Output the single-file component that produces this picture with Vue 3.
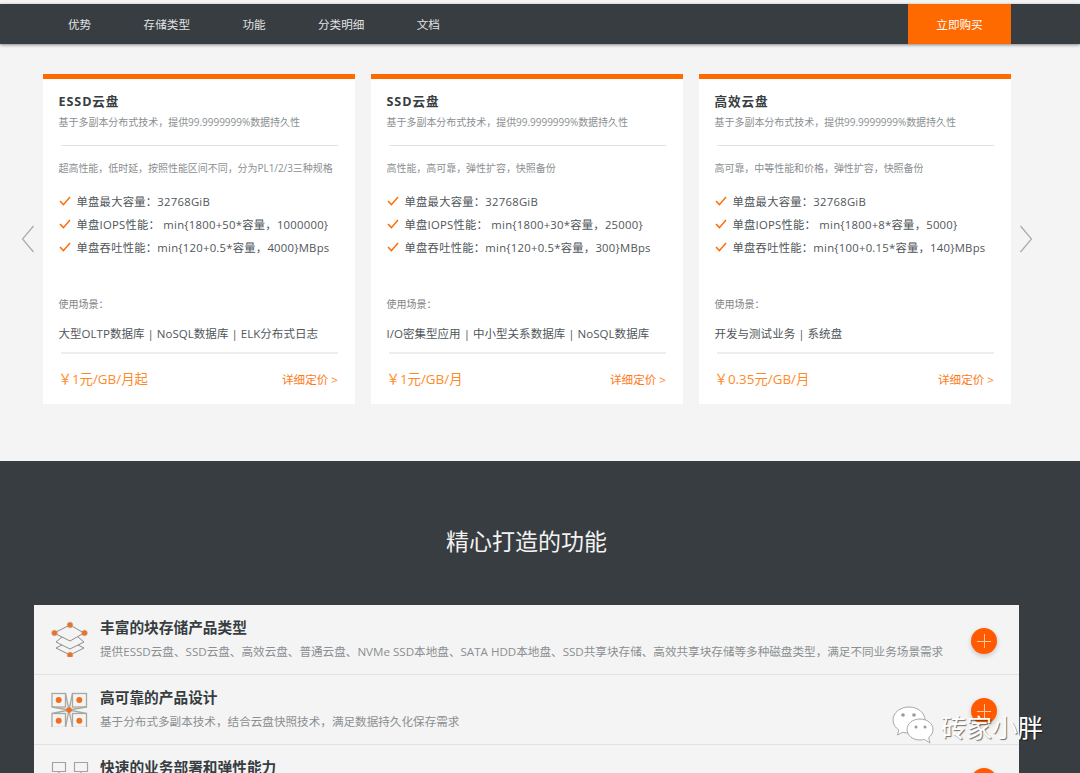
<template>
  <div class="page">
    <nav class="topnav">
      <div class="nav-links">
        <a v-for="item in navItems" :key="item">{{ item }}</a>
      </div>
      <a class="buy">立即购买</a>
    </nav>

    <section class="cards-section">
      <svg class="arrow arrow-left" width="14" height="28" viewBox="0 0 14 28"><path d="M12.500 1 1.500 14l11 13" /></svg>
      <div class="cards">
        <div v-for="card in cards" :key="card.name" class="card">
          <h3 class="card-title">{{ card.name }}</h3>
          <p class="card-sub">基于多副本分布式技术，提供99.9999999%数据持久性</p>
          <div class="line"></div>
          <p class="card-desc">{{ card.desc }}</p>
          <ul class="specs">
            <li v-for="spec in card.specs" :key="spec">
              <svg width="12" height="10" viewBox="0 0 12 10"><path d="M1 5l3.400 3.600L11 1" /></svg>
              <span>{{ spec }}</span>
            </li>
          </ul>
          <p class="scene-label">使用场景：</p>
          <p class="scene">{{ card.scene }}</p>
          <div class="line line-thick"></div>
          <div class="price-row">
            <span class="price">{{ card.price }}</span>
            <a class="detail">详细定价 &gt;</a>
          </div>
        </div>
      </div>
      <svg class="arrow arrow-right" width="14" height="28" viewBox="0 0 14 28"><path d="M1.500 1l11 13-11 13" /></svg>
    </section>

    <section class="features">
      <h2 class="features-title">精心打造的功能</h2>
      <div class="feature-list">
        <div v-for="(f, i) in features" :key="f.title" class="feature">
          <div class="feature-icon">
            <svg v-if="i === 0" width="38" height="38" viewBox="0 0 38 38">
              <g fill="none" stroke="#8c8c88" stroke-width="1">
                <path d="M19 6 33 14 19 22 3 14Z" />
                <path d="M11 18 5 23 19 30 33 23 27 18" />
                <path d="M11 26 5 29 19 36 33 29 27 26" />
              </g>
              <g fill="#f0701f" stroke="#b5a99b" stroke-width=".6">
                <circle cx="19" cy="6" r="2.800" />
                <circle cx="3.500" cy="14" r="2.800" />
                <circle cx="33.500" cy="14" r="2.800" />
                <circle cx="19" cy="36" r="2.800" />
              </g>
            </svg>
            <svg v-else-if="i === 1" width="38" height="38" viewBox="0 0 38 38">
              <g fill="none" stroke="#a8a8a3" stroke-width="1.300">
                <rect x="1" y="4.500" width="13.500" height="13.500" />
                <rect x="21.500" y="4.500" width="14" height="13.500" />
                <rect x="1" y="24.500" width="13.500" height="14" />
                <rect x="21.500" y="24.500" width="14" height="14" />
                <path d="M1 18 18 21 35.500 18M1 24.500 18 21 35.500 24.500M14.500 4.500 18 21 21.500 4.500M14.500 38.500 18 21 21.500 38.500" />
              </g>
              <g fill="#f0701f">
                <circle cx="7.700" cy="11" r="3" />
                <circle cx="28.300" cy="11" r="3" />
                <circle cx="7.700" cy="31.700" r="3" />
                <circle cx="28.300" cy="31.700" r="3" />
                <circle cx="18" cy="21" r="2.800" />
              </g>
            </svg>
            <svg v-else width="38" height="38" viewBox="0 0 38 38">
              <g fill="none" stroke="#a3a39e" stroke-width="1.200">
                <path d="M1.500 3.500h13v9h-13zM8 12.500v8" />
                <path d="M23.500 3.500h13v9h-13zM30 12.500v8" />
              </g>
            </svg>
          </div>
          <div class="feature-text">
            <h4>{{ f.title }}</h4>
            <p>{{ f.text }}</p>
          </div>
          <span class="plus"></span>
        </div>
      </div>
    </section>

    <div class="watermark">
      <svg width="42" height="38" viewBox="0 0 42 38">
        <path class="bubble" d="M17 1C8 1 1 6.800 1 14c0 4 2.300 7.600 5.800 10L5.500 29l5.300-2.800c2 .6 4 .9 6.200 .9 9 0 16-5.800 16-13S26 1 17 1Z" />
        <path class="bubble" d="M28 13c-7.500 0-13 4.800-13 10.500S20.500 34 28 34c1.600 0 3-.2 4.400-.6L38 37l-1.300-5.500C39.300 29.600 41 26.800 41 23.500 41 17.800 35.500 13 28 13Z" />
        <circle cx="11" cy="9" r="1.800" fill="#9a9a9a" />
        <circle cx="22" cy="9" r="1.800" fill="#9a9a9a" />
        <circle cx="24" cy="21" r="1.500" fill="#9a9a9a" />
        <circle cx="33" cy="21" r="1.500" fill="#9a9a9a" />
      </svg>
      <span>砖家小胖</span>
    </div>
  </div>
</template>

<script setup>
const navItems = ['优势', '存储类型', '功能', '分类明细', '文档']

const cards = [
  {
    name: 'ESSD云盘',
    desc: '超高性能，低时延，按照性能区间不同，分为PL1/2/3三种规格',
    specs: ['单盘最大容量：32768GiB', '单盘IOPS性能： min{1800+50*容量，1000000}', '单盘吞吐性能：min{120+0.5*容量，4000}MBps'],
    scene: '大型OLTP数据库 | NoSQL数据库 | ELK分布式日志',
    price: '￥1元/GB/月起'
  },
  {
    name: 'SSD云盘',
    desc: '高性能，高可靠，弹性扩容，快照备份',
    specs: ['单盘最大容量：32768GiB', '单盘IOPS性能： min{1800+30*容量，25000}', '单盘吞吐性能：min{120+0.5*容量，300}MBps'],
    scene: 'I/O密集型应用 | 中小型关系数据库 | NoSQL数据库',
    price: '￥1元/GB/月'
  },
  {
    name: '高效云盘',
    desc: '高可靠，中等性能和价格，弹性扩容，快照备份',
    specs: ['单盘最大容量：32768GiB', '单盘IOPS性能： min{1800+8*容量，5000}', '单盘吞吐性能：min{100+0.15*容量，140}MBps'],
    scene: '开发与测试业务 | 系统盘',
    price: '￥0.35元/GB/月'
  }
]

const features = [
  {
    title: '丰富的块存储产品类型',
    text: '提供ESSD云盘、SSD云盘、高效云盘、普通云盘、NVMe SSD本地盘、SATA HDD本地盘、SSD共享块存储、高效共享块存储等多种磁盘类型，满足不同业务场景需求'
  },
  {
    title: '高可靠的产品设计',
    text: '基于分布式多副本技术，结合云盘快照技术，满足数据持久化保存需求'
  },
  {
    title: '快速的业务部署和弹性能力',
    text: '分钟级完成云盘的创建和挂载，支持在线扩容'
  }
]
</script>

<style>
html, body {
  margin: 0;
  height: 773px;
  overflow: hidden;
  background: #f4f4f4;
}
</style>

<style scoped>
.page {
  position: relative;
  height: 773px;
  overflow: hidden;
  padding-top: 4px;
  box-sizing: border-box;
  background: #f4f4f4;
  font-family: "Open Sans", "Noto Sans CJK SC", sans-serif;
}

p, h2, h3, h4, ul {
  margin: 0;
  padding: 0;
}

.topnav {
  display: flex;
  justify-content: space-between;
  height: 40px;
  padding: 0 69px 0 68px;
  background: #373d41;
  box-shadow: 0 1px 3px rgba(0, 0, 0, 0.45);
}

.nav-links {
  display: flex;
  gap: 52.4px;
  align-items: center;
  color: #e2e3e3;
  font-size: 11.6px;
}

.buy {
  display: flex;
  align-items: center;
  justify-content: center;
  width: 103px;
  background: #ff6a00;
  color: #fff;
  font-size: 11.6px;
}

.cards-section {
  position: relative;
  height: 417px;
  padding: 30px 0 0 43px;
  box-sizing: border-box;
}

.arrow {
  position: absolute;
  top: 181px;
  fill: none;
  stroke: #a5abab;
  stroke-width: 1.2;
}

.arrow-left {
  left: 21px;
}

.arrow-right {
  left: 1019px;
}

.cards {
  display: flex;
  gap: 16px;
}

.card {
  width: 312px;
  height: 330px;
  box-sizing: border-box;
  padding: 14px 17px 0 15.5px;
  background: #fff;
  border-top: 5px solid #ff6a00;
}

.card-title {
  font-size: 12.6px;
  line-height: 18px;
  font-weight: 700;
  color: #373d41;
  letter-spacing: 0.9px;
}

.card-sub {
  margin-top: 3px;
  font-size: 10px;
  line-height: 16px;
  color: #8b8f91;
  letter-spacing: -0.03px;
}

.line {
  height: 1px;
  margin: 15px 0 0 2px;
  background: #e3e3e3;
}

.card-desc {
  margin-top: 14px;
  font-size: 10px;
  line-height: 16px;
  color: #8b8f91;
  letter-spacing: -0.05px;
}

.specs {
  list-style: none;
  margin-top: 13px;
  height: 107px;
}

.specs li {
  display: flex;
  align-items: center;
  gap: 6px;
  height: 23px;
  font-size: 11.3px;
  letter-spacing: 0.25px;
  color: #50565a;
}

.specs svg {
  flex: none;
  fill: none;
  stroke: #ff6a00;
  stroke-width: 1.4;
}

.scene-label {
  font-size: 10px;
  line-height: 16px;
  color: #7f8385;
}

.scene {
  margin-top: 13px;
  font-size: 11.5px;
  line-height: 18px;
  color: #50565a;
  letter-spacing: 0.03px;
}

.line-thick {
  height: 2px;
  margin-top: 9px;
  background: #eee;
}

.price-row {
  display: flex;
  justify-content: space-between;
  align-items: center;
  margin-top: 15px;
}

.price {
  font-size: 13.4px;
  line-height: 20px;
  color: #ff8a2a;
}

.detail {
  font-size: 11.6px;
  color: #ff7a1a;
}

.features {
  height: 312px;
  padding: 63px 61px 0 34px;
  box-sizing: border-box;
  background: #373d41;
}

.features-title {
  text-align: center;
  font-size: 23px;
  line-height: 34px;
  font-weight: 400;
  color: #f2f2f2;
}

.feature-list {
  margin-top: 47px;
  width: 985px;
  background: #f4f4f4;
}

.feature {
  display: flex;
  align-items: flex-start;
  height: 70px;
  box-sizing: border-box;
  padding: 13px 22px 0 17px;
  border-bottom: 1px solid #e2e2e2;
}

.feature-icon {
  flex: none;
  width: 38px;
  height: 38px;
  margin: 1px 11px 0 0;
}

.feature-text {
  flex: 1;
  min-width: 0;
}

.feature-text h4 {
  font-size: 14.7px;
  line-height: 18px;
  font-weight: 700;
  color: #373d41;
}

.feature-text p {
  margin-top: 8px;
  font-size: 11.6px;
  line-height: 16px;
  color: #8b8f91;
  white-space: nowrap;
}

.plus {
  position: relative;
  flex: none;
  width: 26px;
  height: 26px;
  margin-top: 10px;
  border-radius: 50%;
  background: #ff5a00;
  box-shadow: 0 2px 5px rgba(0, 0, 0, 0.2);
}

.plus::before,
.plus::after {
  content: "";
  position: absolute;
  background: #ffc9a8;
}

.plus::before {
  left: 6px;
  right: 6px;
  top: 12.5px;
  height: 1px;
}

.plus::after {
  top: 6px;
  bottom: 6px;
  left: 12.5px;
  width: 1px;
}

.watermark {
  position: absolute;
  left: 892px;
  top: 706px;
  display: flex;
  align-items: center;
  gap: 7px;
  color: #fff;
  font-size: 25.5px;
  text-shadow: 1px 1px 1px rgba(0, 0, 0, 0.55);
}

.bubble {
  fill: #fff;
  stroke: #a8a8a8;
  stroke-width: 1;
}
</style>
